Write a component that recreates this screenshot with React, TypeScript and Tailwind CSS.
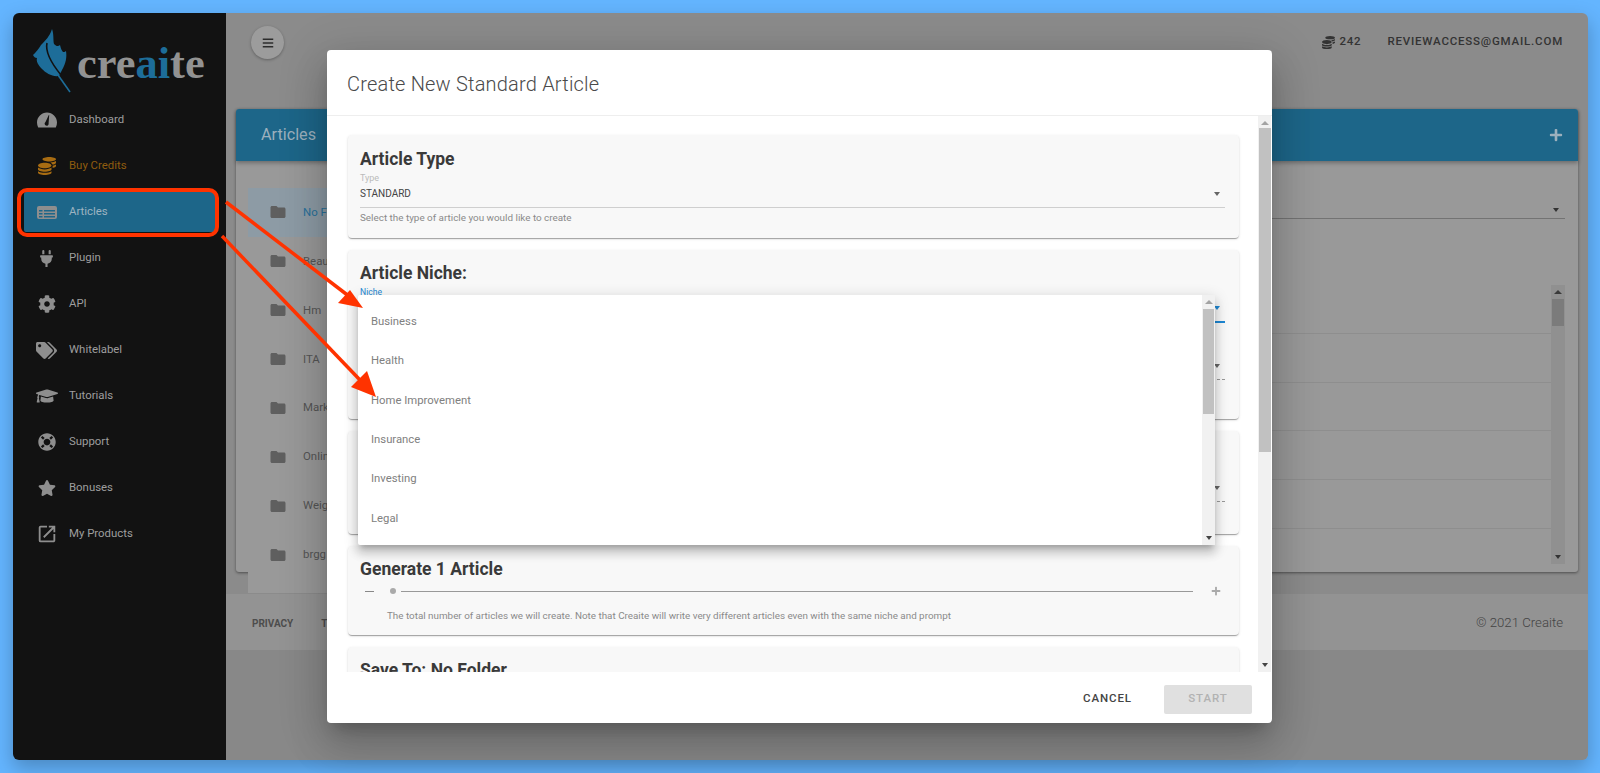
import React from 'react';
import {
  FaCoins,
  FaPlug,
  FaCog,
  FaTags,
  FaGraduationCap,
  FaLifeRing,
  FaStar,
  FaBars,
  FaPlus,
} from 'react-icons/fa';
import { MdFolder, MdOpenInNew } from 'react-icons/md';

const GaugeIcon = () => (
  <svg width="20" height="16" viewBox="0 0 20 16" fill="currentColor">
    <path d="M10 0.5C4.5 0.5 0 5 0 10.5c0 1.8.4 3.5 1.2 5h17.6c.8-1.5 1.2-3.2 1.2-5C20 5 15.5.5 10 .5zM11.6 11.2c.3 1.2-.4 2.2-1.5 2.5-1.1.2-2.2-.5-2.4-1.6-.2-.8.2-1.6.8-2.1L11.8 3l.4.1-.6 8.1z" fillRule="evenodd" />
  </svg>
);

const TableIcon = () => (
  <svg width="20" height="13" viewBox="0 0 20 13" fill="currentColor">
    <path
      fillRule="evenodd"
      d="M2 0h16a2 2 0 0 1 2 2v9a2 2 0 0 1-2 2H2a2 2 0 0 1-2-2V2a2 2 0 0 1 2-2zM2 4v1.6h3.5V4H2zm5 0v1.6h11V4H7zM2 7v1.6h3.5V7H2zm5 0v1.6h11V7H7zM2 10v1.4h3.5V10H2zm5 0v1.4h11V10H7z"
    />
  </svg>
);

const navItems = [
  { label: 'Dashboard', icon: <GaugeIcon /> },
  { label: 'Buy Credits', icon: <FaCoins size={18} />, gold: true },
  { label: 'Articles', icon: <TableIcon />, active: true },
  { label: 'Plugin', icon: <FaPlug size={17} /> },
  { label: 'API', icon: <FaCog size={18} /> },
  { label: 'Whitelabel', icon: <FaTags size={21} /> },
  { label: 'Tutorials', icon: <FaGraduationCap size={22} /> },
  { label: 'Support', icon: <FaLifeRing size={18} /> },
  { label: 'Bonuses', icon: <FaStar size={18} /> },
  { label: 'My Products', icon: <MdOpenInNew size={22} /> },
];

const folders = ['No Folder', 'Beauty', 'Hm', 'ITA', 'Marketing', 'Online', 'Weight', 'brgg'];
const niches = ['Business', 'Health', 'Home Improvement', 'Insurance', 'Investing', 'Legal'];

const Logo = () => (
  <div className="h-[84px] flex items-start">
    <svg className="ml-[20px] mt-[16px]" width="38" height="64" viewBox="33 29 38 64">
      <path
        fill="#1d6d99"
        d="M52 29C54 34 53 40 54 44C56 46 58 47 60 45C61 49 62 51 63 52C64 52 65 52 66 51C67 57 66 63 62 70L59 76C52 77 46 73 42 69C38 65 36 61 37 58C35 58 34 57 33 55C36 52 38 50 41 45C45 41 50 36 52 29Z"
      />
      <path d="M47 43C45 52 52 64 61 75" fill="none" stroke="#121212" strokeWidth="1.6" />
      <line x1="58" y1="75" x2="70" y2="92" stroke="#1d6d99" strokeWidth="1.6" />
    </svg>
    <div className="ml-[6px] mt-[25px] font-['Liberation_Serif'] font-bold text-[44.5px] leading-[50px] text-[#929292]">
      cre<span className="text-[#1d6d99]">ai</span>te
    </div>
  </div>
);

const Sidebar = () => (
  <aside className="w-[213px] shrink-0 bg-[#121212] rounded-l-[6px]">
    <Logo />
    <nav>
      {navItems.map((item) => (
        <div key={item.label} className="h-[46px] py-[3px] px-[11px]">
          <div
            className={`h-[40px] flex items-center rounded-[2px] ${item.active ? 'bg-[#1d6689] text-[#9db4c1]' : item.gold ? 'text-[#8f5c0f]' : 'text-[#9e9e9e]'}`}
          >
            <span className={`w-[45px] flex justify-center ${item.gold ? 'text-[#a86c12]' : 'text-[#8e8e8e]'}`}>
              {item.icon}
            </span>
            <span className="text-[11.4px]">{item.label}</span>
          </div>
        </div>
      ))}
    </nav>
  </aside>
);

const Caret = ({ className }: { className: string }) => (
  <div className={`w-0 h-0 border-x-[3.5px] border-t-[4px] border-x-transparent ${className}`} />
);

const ScrollBar = ({ track, thumb, arrow, top, height, className }: {
  track: string;
  thumb: string;
  arrow: string;
  top: string;
  height: string;
  className: string;
}) => (
  <div className={`flex flex-col items-center ${track} ${className}`}>
    <div
      className={`mt-[5px] w-0 h-0 border-x-[4px] border-b-[4px] border-x-transparent ${arrow === 'dark' ? 'border-b-[#3a3a3a]' : 'border-b-[#a3a3a3]'}`}
    />
    <div className={`w-full ${top} ${height} ${thumb}`} />
    <Caret className={`mt-auto mb-[5px] ${arrow === 'dark' ? 'border-t-[#333]' : 'border-t-[#444]'}`} />
  </div>
);

const Background = () => (
  <main className="flex-1 flex flex-col bg-[#8b8b8b] rounded-r-[6px] overflow-hidden">
    <div className="h-[96px] shrink-0 flex items-start justify-between pl-[25px] pr-[25px] pt-[13px]">
      <div className="w-[33px] h-[33px] rounded-full bg-[#9c9c9c] shadow-[0_1px_3px_rgba(0,0,0,.3)] flex items-center justify-center text-[#2c2c2c]">
        <FaBars size={12} />
      </div>
      <div className="flex items-center h-[32px] text-[#333] text-[11.5px] font-medium tracking-[0.07em]">
        <FaCoins size={13} className="mr-[4px]" />
        <span className="mr-[26px]">242</span>
        <span>REVIEWACCESS@GMAIL.COM</span>
      </div>
    </div>
    <div className="h-[463px] mx-[10px] shrink-0 flex flex-col rounded-[3px] bg-[#999] shadow-[0_1px_3px_rgba(0,0,0,.45)]">
      <div className="h-[52px] shrink-0 bg-[#1d6689] rounded-t-[3px] flex items-center justify-between px-[25px] pr-[15px] shadow-[0_2px_4px_rgba(0,0,0,.3)] text-[#9cb0bd]">
        <span className="text-[16.2px]">Articles</span>
        <FaPlus size={14} />
      </div>
      <div className="flex-1 flex pl-[12px] pr-[13px] pt-[27px]">
        <div className="w-[250px] h-[405px] shrink-0 bg-[#999]">
          {folders.map((name, i) => (
            <div
              key={name}
              className={`h-[48.9px] flex items-center pl-[21px] text-[11.4px] ${i === 0 ? 'bg-[#8d9ba5] text-[#28709a]' : 'text-[#555]'}`}
            >
              <MdFolder size={18} className="text-[#5f5f5f] w-[18px] mr-[16px]" />
              {name}
            </div>
          ))}
        </div>
        <div className="flex-1 flex flex-col ml-[30px]">
          <div className="h-[31px] shrink-0 flex items-end justify-end border-b border-[#737373]">
            <Caret className="border-t-[#333] mr-[6px] mb-[6px]" />
          </div>
          <div className="h-[279px] flex mt-[66px] overflow-hidden">
            <div className="flex-1 pt-[48px]">
              {[0, 1, 2, 3, 4].map((i) => (
                <div key={i} className="h-[48.7px] border-t border-[#8e8e8e]" />
              ))}
            </div>
            <ScrollBar
              track="bg-[#909090]"
              thumb="bg-[#7b7b7b]"
              arrow="dark"
              top="mt-[5px]"
              height="h-[27px]"
              className="w-[14px] px-[1px]"
            />
          </div>
        </div>
      </div>
    </div>
    <div className="h-[56px] mt-[22px] shrink-0 bg-[#939393] flex items-center justify-between pl-[26px] pr-[25px] pt-[2px]">
      <div className="flex text-[10px] font-bold text-[#4d4d4d]">
        <span>PRIVACY</span>
        <span className="ml-[28px]">TERMS</span>
      </div>
      <span className="text-[13.2px] font-light text-[#444]">© 2021 Creaite</span>
    </div>
    <div className="flex-1 bg-[#888]" />
  </main>
);

const cardClass =
  'rounded-[4px] bg-[#f8f8f8] shadow-[0_2px_1px_-1px_rgba(0,0,0,.2),0_1px_1px_rgba(0,0,0,.14),0_1px_3px_rgba(0,0,0,.12)] pl-[12px] pr-[14px]';
const titleClass = 'text-[17.5px] leading-[22px] font-bold text-[#3a3a3a]';

const Modal = () => (
  <div className="absolute left-[327px] top-[50px] w-[945px] h-[673px] flex flex-col bg-white rounded-[4px] shadow-[0_11px_15px_-7px_rgba(0,0,0,.2),0_24px_38px_3px_rgba(0,0,0,.14),0_9px_46px_8px_rgba(0,0,0,.12)]">
    <div className="h-[66px] shrink-0 flex items-center pl-[20px] pt-[2px] text-[20px] tracking-[0.01em] font-light text-[#4a4a4a] border-b border-[#eee]">
      Create New Standard Article
    </div>
    <div className="flex-1 flex min-h-0">
      <div className="flex-1 overflow-hidden pt-[19px] pl-[21px] pr-[19px] flex flex-col gap-[12px]">
        <div className={`${cardClass} h-[103px] shrink-0 pt-[13px]`}>
          <div className={titleClass}>Article Type</div>
          <div className="mt-[2px] text-[9px] leading-[12px] text-[#bbb]">Type</div>
          <div className="mt-[3px] h-[21px] flex justify-between border-b border-[#cfcfcf] text-[10px] leading-[14px] text-[#444]">
            STANDARD
            <Caret className="border-t-[#666] mt-[5px] mr-[5px]" />
          </div>
          <div className="mt-[4px] text-[9.9px] leading-[12px] text-[#8a8a8a]">
            Select the type of article you would like to create
          </div>
        </div>
        <div className={`${cardClass} h-[169px] shrink-0 pt-[12px]`}>
          <div className={titleClass}>Article Niche:</div>
          <div className="mt-[2px] text-[8.6px] leading-[12px] text-[#1e88d4]">Niche</div>
          <div className="h-[25px] flex justify-end border-b-2 border-[#1e88d4]">
            <Caret className="border-t-[#1e88d4] mt-[8px] mr-[5px]" />
          </div>
          <div className="mt-[32px] h-[25px] flex justify-end border-b border-dashed border-[#999]">
            <Caret className="border-t-[#666] mt-[9px] mr-[5px]" />
          </div>
        </div>
        <div className={`${cardClass} h-[103px] shrink-0 pt-[46px]`}>
          <div className="h-[25px] flex justify-end border-b border-dashed border-[#999]">
            <Caret className="border-t-[#666] mt-[9px] mr-[5px]" />
          </div>
        </div>
        <div className={`${cardClass} h-[89px] shrink-0 pt-[12px]`}>
          <div className={titleClass}>Generate 1 Article</div>
          <div className="mt-[3px] h-[16px] flex items-center pl-[5px] pr-[4px] text-[#999]">
            <div className="w-[9px] h-[1px] bg-[#888]" />
            <div className="ml-[16px] w-[6px] h-[6px] rounded-full bg-[#aaa]" />
            <div className="ml-[5px] flex-1 h-[1px] bg-[#999]" />
            <FaPlus size={10} className="ml-[18px] text-[#aaa]" />
          </div>
          <div className="mt-[11px] pl-[27px] text-[9.85px] leading-[12px] text-[#8a8a8a]">
            The total number of articles we will create. Note that Creaite will write very different articles even with the same niche and prompt
          </div>
        </div>
        <div className={`${cardClass} h-[89px] shrink-0 pt-[12px]`}>
          <div className={titleClass}>Save To: No Folder</div>
        </div>
      </div>
      <ScrollBar
        track="bg-[#f1f1f1]"
        thumb="bg-[#c1c1c1]"
        arrow="light"
        top="mt-[3px]"
        height="h-[324px]"
        className="w-[13px] mr-[1px] pl-[1px]"
      />
    </div>
    <div className="h-[51px] shrink-0 flex items-center justify-end pr-[20px] pt-[3px] text-[11.5px] font-medium tracking-[0.08em]">
      <span className="text-[#444] mr-[32px]">CANCEL</span>
      <div className="w-[88px] h-[29px] flex items-center justify-center rounded-[2px] bg-[#e0e0e0] text-[#b2b2b2]">START</div>
    </div>

    <div className="absolute left-[31px] top-[245px] w-[857px] h-[250px] flex bg-white rounded-[2px] shadow-[0_5px_5px_-3px_rgba(0,0,0,.2),0_8px_10px_1px_rgba(0,0,0,.14),0_3px_14px_2px_rgba(0,0,0,.12)]">
      <div className="flex-1 pt-[7.5px] pl-[13px]">
        {niches.map((n) => (
          <div key={n} className="h-[39.4px] flex items-center text-[11.3px] text-[#808080]">
            {n}
          </div>
        ))}
      </div>
      <ScrollBar
        track="bg-[#f1f1f1]"
        thumb="bg-[#c1c1c1]"
        arrow="light"
        top="mt-[5px]"
        height="h-[105px]"
        className="w-[13px] px-[1px]"
      />
    </div>
  </div>
);

// annotation drawn on top of the screenshot
const Annotations = () => (
  <>
    <div className="absolute left-[17px] top-[188px] w-[202px] h-[49px] rounded-[10px] border-[4px] border-[#ff3300]" />
    <svg className="absolute left-0 top-0 pointer-events-none" width="1600" height="773">
      <line x1="226" y1="202" x2="350" y2="297" stroke="#ff3300" strokeWidth="3.5" />
      <polygon points="363,308 338,303 350,290" fill="#ff3300" />
      <line x1="222" y1="236" x2="360" y2="380" stroke="#ff3300" strokeWidth="3.5" />
      <polygon points="376,397 351,387 367,371" fill="#ff3300" />
    </svg>
  </>
);

export default function App() {
  return (
    <div className="relative w-full h-screen overflow-hidden bg-[#64b5ff] font-['Roboto',sans-serif] pl-[13px] pr-[12px] pt-[13px] pb-[13px]">
      <div className="h-full flex rounded-[6px] shadow-[0_8px_20px_rgba(0,0,0,.25)]">
        <Sidebar />
        <Background />
      </div>
      <Modal />
      <Annotations />
    </div>
  );
}
